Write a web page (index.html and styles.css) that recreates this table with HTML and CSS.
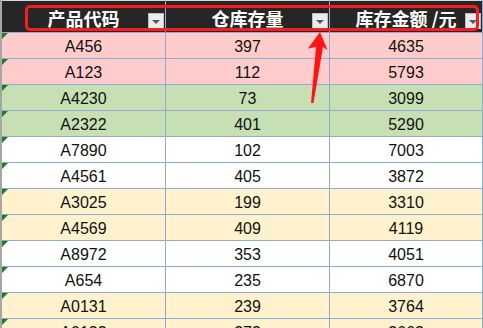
FILE: index.html
```html
<!DOCTYPE html>
<html lang="zh-CN">
<head>
<meta charset="utf-8">
<title>库存表</title>
<link rel="stylesheet" href="styles.css">
</head>
<body>
<div class="sheet">
  <div class="grid">
    <div class="hcell"><span></span><span class="htext">产品代码</span><span class="filter"><i></i></span></div>
    <div class="hcell"><span></span><span class="htext">仓库存量</span><span class="filter"><i></i></span></div>
    <div class="hcell"><span></span><span class="htext">库存金额 /元</span><span class="filter"><i></i></span></div>

    <div class="cell code pink">A456</div><div class="cell pink">397</div><div class="cell pink">4635</div>
    <div class="cell code pink">A123</div><div class="cell pink">112</div><div class="cell pink">5793</div>
    <div class="cell code green">A4230</div><div class="cell green">73</div><div class="cell green">3099</div>
    <div class="cell code green">A2322</div><div class="cell green">401</div><div class="cell green">5290</div>
    <div class="cell code">A7890</div><div class="cell">102</div><div class="cell">7003</div>
    <div class="cell code">A4561</div><div class="cell">405</div><div class="cell">3872</div>
    <div class="cell code yellow">A3025</div><div class="cell yellow">199</div><div class="cell yellow">3310</div>
    <div class="cell code yellow">A4569</div><div class="cell yellow">409</div><div class="cell yellow">4119</div>
    <div class="cell code">A8972</div><div class="cell">353</div><div class="cell">4051</div>
    <div class="cell code">A654</div><div class="cell">235</div><div class="cell">6870</div>
    <div class="cell code yellow">A0131</div><div class="cell yellow">239</div><div class="cell yellow">3764</div>
    <div class="cell code yellow">A0132</div><div class="cell yellow">273</div><div class="cell yellow">3663</div>
  </div>
  <div class="highlight"></div>
  <svg class="arrow" width="483" height="328" viewBox="0 0 483 328" aria-hidden="true">
    <polygon points="320,32 327.5,50 323,47 313.5,103 311,103 316,47 308,48.5" fill="#ff1414"/>
  </svg>
</div>
</body>
</html>
```

FILE: styles.css
```css
html, body {
  margin: 0;
  padding: 0;
  overflow: hidden;
  background: #ffffff;
}

.sheet {
  position: relative;
  width: 483px;
  height: 328px;
  overflow: hidden;
}

.grid {
  display: grid;
  grid-template-columns: 163px 163px 152px;
  grid-auto-rows: 25px;
  grid-template-rows: 31px;
  gap: 1px;
  padding-right: 1px;
  padding-top: 1px;
  border-left: 2px solid #a6a6a6;
  background: #8eaadb;
  width: 483px;
  box-sizing: border-box;
}

.hcell {
  background: #262626;
  display: grid;
  grid-template-columns: 17px 1fr 17px;
  align-items: start;
  box-shadow: 0 -1px 0 #d9d9d9;
}

.htext {
  color: #ffffff;
  font-family: "Noto Sans CJK SC", "Microsoft YaHei", sans-serif;
  font-weight: 700;
  font-size: 18px;
  line-height: 20px;
  text-align: center;
  padding-top: 7px;
  white-space: nowrap;
}

.filter {
  margin-top: 12px;
  width: 16px;
  height: 16px;
  box-sizing: border-box;
  background: #ececec;
  border: 1px solid #bdbdbd;
  display: flex;
  align-items: center;
  justify-content: center;
}

.filter i {
  display: block;
  width: 0;
  height: 0;
  border-left: 4px solid transparent;
  border-right: 4px solid transparent;
  border-top: 4px solid #595959;
  margin-top: 1px;
}

.cell {
  background: #ffffff;
  font-family: "Liberation Sans", Arial, sans-serif;
  font-size: 16px;
  color: #111111;
  display: flex;
  align-items: center;
  justify-content: center;
  padding-top: 3px;
  box-sizing: border-box;
  position: relative;
}

.cell.pink { background: #ffcccc; }
.cell.green { background: #c6e0b4; }
.cell.yellow { background: #fff2cc; }

.cell.code::before {
  content: "";
  position: absolute;
  left: 0;
  top: 0;
  width: 0;
  height: 0;
  border-top: 6px solid #1b7d1b;
  border-right: 6px solid transparent;
}

.highlight {
  position: absolute;
  left: 25px;
  top: 5px;
  width: 454px;
  height: 26px;
  box-sizing: border-box;
  border: 3px solid #fb1d1d;
  border-radius: 5px;
}

.arrow {
  position: absolute;
  left: 0;
  top: 0;
  pointer-events: none;
}
```
